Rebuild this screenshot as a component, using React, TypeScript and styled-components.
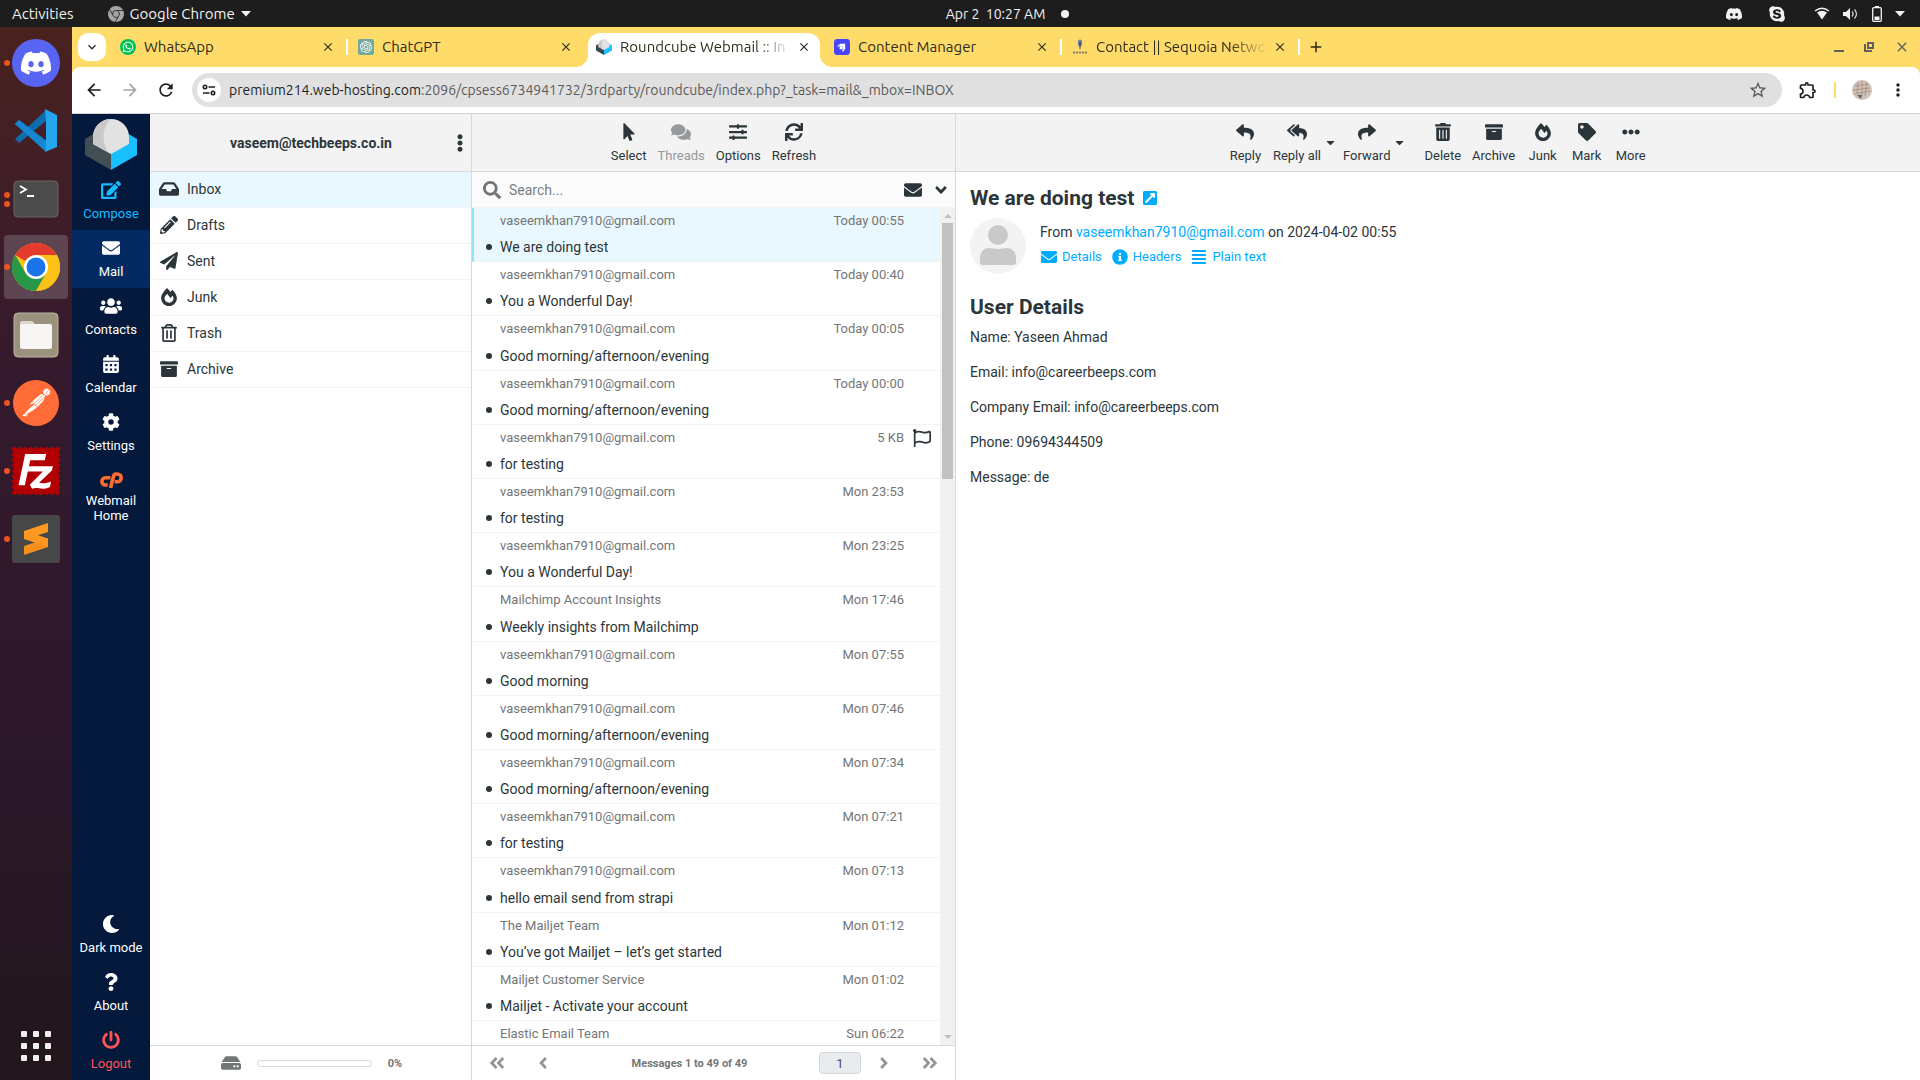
import React from "react";
import styled, { createGlobalStyle, css } from "styled-components";
import {
  FaEdit, FaEnvelope, FaUsers, FaCalendarAlt, FaCog, FaMoon, FaQuestion, FaPowerOff,
  FaInbox, FaPencilAlt, FaPaperPlane, FaFireAlt, FaRegTrashAlt, FaArchive, FaEllipsisV,
  FaMousePointer, FaComments, FaSlidersH, FaSync, FaSearch, FaAngleDown, FaReply, FaReplyAll,
  FaShare, FaCaretDown, FaTrashAlt, FaTag, FaEllipsisH, FaExternalLinkSquareAlt, FaInfoCircle,
  FaAlignJustify, FaRegFlag, FaHdd, FaAngleDoubleLeft, FaAngleLeft, FaAngleRight,
  FaAngleDoubleRight, FaSkype, FaWhatsapp,
} from "react-icons/fa";
import { SiDiscord, SiPostman, SiFilezilla, SiOpenai, SiStrapi, SiGooglechrome } from "react-icons/si";
import {
  MdArrowBack, MdArrowForward, MdRefresh, MdStarBorder, MdOutlineExtension, MdMoreVert,
  MdAdd, MdClose, MdKeyboardArrowDown,
} from "react-icons/md";

const systemFont = `Ubuntu, "Noto Sans", "Open Sans", sans-serif`;
const mailFont = `Roboto, "Liberation Sans", sans-serif`;

const c = {
  text: "#2c363a",
  muted: "#737677",
  line: "#d4dbde",
  rowLine: "#f1f3f4",
  accent: "#00acff",
  selected: "#e9f8ff",
  header: "#f3f3f3",
};

const GlobalStyle = createGlobalStyle`
  *, *::before, *::after { box-sizing: border-box; }
  html, body, #root { height: 100%; }
  body { margin: 0; overflow: hidden; }
  button { border: 0; padding: 0; margin: 0; background: none; color: inherit; font: inherit; cursor: pointer; }
  a { color: inherit; text-decoration: none; }
  ul, h1, h2, p { margin: 0; padding: 0; }
  ul { list-style: none; }
  svg { display: block; flex: none; }
`;

/* ---------- desktop ---------- */

const Desktop = styled.div`
  display: flex;
  flex-direction: column;
  height: 100%;
  font-family: ${systemFont};
`;

const TopBar = styled.header`
  display: grid;
  grid-template-columns: 1fr auto 1fr;
  align-items: center;
  flex: none;
  height: 27px;
  padding: 0 15px 0 12px;
  background: #1d1d1d;
  color: #f2f2f2;
  font-size: 15px;
  line-height: 20px;
  white-space: pre;
`;

const TopGroup = styled.div<{ $gap: number; $end?: boolean }>`
  display: flex;
  align-items: center;
  gap: ${(p) => p.$gap}px;
  justify-content: ${(p) => (p.$end ? "flex-end" : "flex-start")};
`;

const AppMenu = styled.button`
  display: flex;
  align-items: center;
  gap: 6px;
  margin-left: 34px;
`;

const Clock = styled.button`
  display: flex;
  align-items: center;
  gap: 16px;
  padding-left: 98px;
  font-size: 14px;
  &::after { content: ""; width: 8px; height: 8px; border-radius: 50%; background: #f2f2f2; }
`;

const TrayGap = styled.span`
  width: 2px;
`;

const Workspace = styled.div`
  display: flex;
  flex: 1;
  min-height: 0;
`;

const Dock = styled.nav`
  display: flex;
  flex-direction: column;
  align-items: center;
  gap: 4px;
  flex: none;
  width: 72px;
  padding: 4px 0 2px;
  background: linear-gradient(#49221f 0%, #411e27 15%, #351a2d 32%, #31192c 50%, #291727 75%, #22161c 100%);
`;

const DockItem = styled.button<{ $active?: boolean; $last?: boolean }>`
  position: relative;
  display: flex;
  align-items: center;
  justify-content: center;
  width: 64px;
  height: 64px;
  border-radius: 4px;
  background: ${(p) => (p.$active ? "#5d4652" : "transparent")};
  margin-top: ${(p) => (p.$last ? "auto" : "0")};
`;

const Running = styled.span`
  position: absolute;
  left: 0;
  top: 0;
  bottom: 0;
  display: flex;
  flex-direction: column;
  justify-content: center;
  gap: 3px;
  i { width: 6px; height: 6px; border-radius: 50%; background: #e95420; }
`;

const Disc = styled.span<{ $bg: string; $size: number; $fg?: string; $radius?: string }>`
  display: flex;
  align-items: center;
  justify-content: center;
  flex: none;
  width: ${(p) => p.$size}px;
  height: ${(p) => p.$size}px;
  border-radius: ${(p) => p.$radius || "50%"};
  background: ${(p) => p.$bg};
  color: ${(p) => p.$fg || "#fff"};
`;

/* ---------- browser ---------- */

const Browser = styled.main`
  display: flex;
  flex-direction: column;
  flex: 1;
  min-width: 0;
  background: #ffdb69;
`;

const TabStrip = styled.div`
  display: flex;
  align-items: flex-end;
  flex: none;
  height: 40px;
  padding-left: 6px;
  color: #2f2b1c;
  font-size: 15px;
`;

const TabSearch = styled.button`
  display: flex;
  align-items: center;
  justify-content: center;
  width: 28px;
  height: 28px;
  margin: 0 6px 6px 0;
  border-radius: 10px;
  background: #fff;
`;

const Tab = styled.div<{ $active?: boolean; $divider?: boolean }>`
  position: relative;
  display: flex;
  align-items: center;
  gap: 8px;
  width: 232px;
  height: 34px;
  margin-right: 6px;
  padding: 0 8px 6px;
  border-radius: 12px 12px 0 0;
  ${(p) => p.$active && css`
    background: #fff;
    &::before, &::after { content: ""; position: absolute; bottom: 0; width: 12px; height: 12px; }
    &::before { right: 100%; background: radial-gradient(circle at 0 0, transparent 12px, #fff 12px); }
    &::after { left: 100%; background: radial-gradient(circle at 100% 0, transparent 12px, #fff 12px); }
  `}
  ${(p) => p.$divider && css`
    &::after { content: ""; position: absolute; left: 234px; top: 6px; width: 2px; height: 16px; background: #fff; }
  `}
`;

const TabTitle = styled.span<{ $fade?: boolean }>`
  flex: 1;
  min-width: 0;
  white-space: nowrap;
  line-height: 20px;
  ${(p) => p.$fade && css`mask-image: linear-gradient(90deg, #000 80%, transparent 102%);`}
`;

const TabClose = styled.button`
  display: flex;
  align-items: center;
  justify-content: center;
  width: 16px;
  height: 16px;
`;

const NewTab = styled.button`
  display: flex;
  align-items: center;
  height: 28px;
  margin: 0 auto 6px 0;
  padding: 0 5px;
`;

const WindowButtons = styled.div`
  display: flex;
  align-items: center;
  gap: 20px;
  height: 28px;
  margin-bottom: 6px;
  padding-right: 10px;
  color: #5f5f5f;
`;

const NavBar = styled.div`
  display: flex;
  align-items: center;
  flex: none;
  height: 47px;
  padding: 0 12px;
  border-bottom: 1px solid #d0d2d3;
  border-radius: 8px 8px 0 0;
  background: #fff;
  color: #1f1f1f;
`;

const NavButton = styled.button<{ $dim?: boolean }>`
  display: flex;
  margin-right: 16px;
  color: ${(p) => (p.$dim ? "#a6a6a6" : "inherit")};
`;

const Omnibox = styled.div`
  display: flex;
  align-items: center;
  flex: 1;
  gap: 8px;
  height: 34px;
  padding: 0 14px 0 5px;
  border-radius: 17px;
  background: #e0e0e0;
  font-size: 14px;
  line-height: 20px;
  color: #5a5a5a;
`;

const Address = styled.span`
  flex: 1;
  white-space: nowrap;
  b { font-weight: 400; color: #1f1f1f; }
`;

const NavExtras = styled.div`
  display: flex;
  align-items: center;
  gap: 16px;
  margin-left: 16px;
`;

const ProfileDivider = styled.span`
  width: 2px;
  height: 16px;
  background: #ffdb69;
`;

/* ---------- webmail ---------- */

const Mail = styled.div`
  display: flex;
  flex: 1;
  min-height: 0;
  background: #fff;
  color: ${c.text};
  font-family: ${mailFont};
  font-size: 14px;
`;

const TaskMenu = styled.nav`
  display: flex;
  flex-direction: column;
  flex: none;
  width: 78px;
  background: #04193c;
  color: #fff;
`;

const LogoBox = styled.div`
  display: flex;
  justify-content: center;
  height: 58px;
  padding-top: 4px;
`;

const TaskItem = styled.a<{ $active?: boolean; $color?: string; $wrap?: boolean; $bottom?: boolean }>`
  display: flex;
  flex-direction: column;
  align-items: center;
  gap: ${(p) => (p.$wrap ? 3 : 6)}px;
  padding: 8px 4px 9px;
  margin-top: ${(p) => (p.$bottom ? "auto" : "0")};
  background: ${(p) => (p.$active ? "#042a61" : "transparent")};
  color: ${(p) => p.$color || "inherit"};
  font-size: 13px;
  line-height: 15px;
  text-align: center;
`;

const IconBox = styled.span`
  display: flex;
  align-items: center;
  justify-content: center;
  width: 24px;
  height: 20px;
`;

const Column = styled.section<{ $width?: number }>`
  display: flex;
  flex-direction: column;
  min-width: 0;
  ${(p) => (p.$width ? css`flex: none; width: ${p.$width}px; border-right: 1px solid ${c.line};` : css`flex: 1;`)}
`;

const ColumnHeader = styled.div`
  display: flex;
  align-items: center;
  justify-content: center;
  gap: 1px;
  flex: none;
  height: 58px;
  border-bottom: 1px solid ${c.line};
  background: ${c.header};
`;

const AccountHeader = styled(ColumnHeader)`
  display: grid;
  grid-template-columns: 1fr auto 1fr;
  padding: 0 2px 0 3px;
  font-weight: 700;
  button { justify-self: end; }
`;

const FolderLink = styled.a<{ $active?: boolean }>`
  display: flex;
  align-items: center;
  gap: 6px;
  height: 36px;
  padding: 0 0 2px 7px;
  border-bottom: 1px solid ${c.rowLine};
  background: ${(p) => (p.$active ? c.selected : "transparent")};
  line-height: 20px;
`;

const Footer = styled.footer`
  display: flex;
  align-items: center;
  flex: none;
  height: 35px;
  border-top: 1px solid ${c.line};
  color: ${c.muted};
  font-size: 11px;
  font-weight: 700;
`;

const QuotaFooter = styled(Footer)`
  justify-content: center;
  gap: 16px;
  margin-top: auto;
  padding-left: 2px;
`;

const QuotaBar = styled.div`
  width: 115px;
  height: 7px;
  border: 1px solid ${c.line};
  border-radius: 4px;
`;

const ToolButton = styled.button<{ $split?: boolean }>`
  display: flex;
  flex-direction: column;
  align-items: center;
  gap: 6px;
  min-width: 43px;
  padding: 0 ${(p) => (p.$split ? 4 : 5)}px 0 5px;
  font-size: 13px;
  line-height: 15px;
  &:disabled { color: #96999b; cursor: default; }
`;

const SplitToggle = styled.button`
  display: flex;
  justify-content: center;
  width: 8px;
  margin-right: 3px;
`;

const ToolGap = styled.span`
  width: 11px;
`;

const SearchBar = styled.form`
  display: flex;
  align-items: center;
  flex: none;
  height: 36px;
  padding-left: 10px;
  border-bottom: 1px solid ${c.rowLine};
  background: #fbfbfb;
  label { display: flex; width: 27px; padding-left: 1px; color: ${c.muted}; }
`;

const SearchInput = styled.input`
  flex: 1;
  min-width: 0;
  padding: 0;
  border: 0;
  outline: 0;
  background: none;
  color: ${c.text};
  font: 14px/20px ${mailFont};
  &::placeholder { color: #7b8082; opacity: 1; }
`;

const SearchAction = styled.button`
  display: flex;
  justify-content: center;
  width: 28px;
`;

const ListArea = styled.div`
  display: flex;
  flex: 1;
  min-height: 0;
`;

const MessageList = styled.ul`
  flex: 1;
  overflow: hidden;
  li:nth-child(5n + 3) > a { row-gap: 9px; }
`;

const MessageRow = styled.a<{ $active?: boolean }>`
  display: grid;
  grid-template-columns: 26px 1fr auto 36px;
  grid-template-rows: 18px 18px;
  row-gap: 8px;
  padding: 4px 0 5px;
  border-left: 2px solid ${(p) => (p.$active ? "#94e0ff" : "transparent")};
  border-bottom: 1px solid ${c.rowLine};
  background: ${(p) => (p.$active ? c.selected : "transparent")};
  line-height: 18px;
`;

const Meta = styled.span`
  color: ${c.muted};
  font-size: 13px;
`;

const Sender = styled(Meta)`
  grid-column: 2;
`;

const FlagCell = styled.span`
  display: flex;
  align-items: center;
  justify-content: center;
`;

const Unread = styled.span`
  grid-column: 1;
  grid-row: 2;
  place-self: center;
  width: 6px;
  height: 6px;
  margin-left: 4px;
  border-radius: 50%;
  background: ${c.text};
`;

const Subject = styled.span`
  grid-column: 2 / 4;
`;

const ScrollTrack = styled.div`
  display: flex;
  flex-direction: column;
  align-items: center;
  flex: none;
  width: 15px;
  padding: 6px 0;
  background: #f1f1f1;
  color: #c1c1c1;
`;

const ScrollThumb = styled.div`
  width: 11px;
  flex: 0 0 31%;
  margin: 5px 0 auto;
  background: #c1c1c1;
`;

const PageButton = styled.button`
  display: flex;
  justify-content: center;
  width: 46px;
  color: #8f9698;
`;

const PageStatus = styled.span`
  flex: 1;
  padding-right: 6px;
  text-align: center;
`;

const PageInput = styled.input`
  width: 42px;
  height: 22px;
  padding: 0;
  border: 1px solid #ced4da;
  border-radius: 4px;
  background: #e9ecef;
  color: #495057;
  font: 13px/18px ${mailFont};
  text-align: center;
`;

const Pager = styled(Footer)`
  padding: 0 2px;
`;

const Message = styled.article`
  padding: 14px;
  line-height: 21px;
`;

const MessageTitle = styled.h1`
  display: flex;
  align-items: center;
  gap: 8px;
  margin-bottom: 8px;
  font-size: 21px;
  line-height: 24px;
  svg { color: ${c.accent}; }
`;

const Envelope = styled.div`
  display: flex;
  gap: 14px;
  margin-bottom: 21px;
`;

const FromBlock = styled.div`
  padding-top: 4px;
  > p > a { color: ${c.accent}; }
`;

const HeaderLinks = styled.div`
  display: flex;
  gap: 10px;
  margin-top: 4px;
  padding-left: 1px;
  color: ${c.accent};
  font-size: 13px;
  line-height: 20px;
  a { display: flex; align-items: center; gap: 5px; }
`;

const BodyTitle = styled.h2`
  margin-bottom: 8px;
  font-size: 21px;
  line-height: 24px;
`;

const BodyLine = styled.p`
  margin-bottom: 14px;
`;

/* ---------- drawings ---------- */

const VsCodeIcon = () => (
  <svg width="44" height="44" viewBox="0 0 44 44">
    <path d="M1 15l4-4 29 22v9L1 15z" fill="#0d7fc4" />
    <path d="M1 30l4 4L32 12V1z" fill="#0e6cad" />
    <path d="M1 15l4-4 28 22-2 9z" fill="#1587cf" />
    <path d="M31 0l12 6v32l-12 5 1-10V12z" fill="#26a5ef" />
  </svg>
);

const TerminalIcon = () => (
  <svg width="46" height="38" viewBox="0 0 46 38">
    <rect x="1" y="1" width="44" height="36" rx="4" fill="#4b4b4b" stroke="#6b6765" />
    <path d="M7 6l6 3.500-6 3.500M14 16h7" fill="none" stroke="#fff" strokeWidth="1.800" />
  </svg>
);

const ChromeIcon = () => (
  <svg width="48" height="48" viewBox="0 0 48 48">
    <circle cx="24" cy="24" r="24" fill="#fbc116" />
    <path d="M24 24L3.200 12A24 24 0 0 1 44.800 12z" fill="#e33b2e" />
    <path d="M3.200 12A24 24 0 0 0 24 48l10.400-18L13.600 30z" fill="#279847" />
    <path d="M24 12h20.800A24 24 0 0 1 24 48l10.400-18z" fill="#fbc116" />
    <circle cx="24" cy="24" r="12" fill="#fff" />
    <circle cx="24" cy="24" r="9.500" fill="#1a73e8" />
  </svg>
);

const FilesIcon = () => (
  <svg width="46" height="46" viewBox="0 0 46 46">
    <rect x="1" y="1" width="44" height="44" rx="4" fill="#9b927d" stroke="#bdb6a3" />
    <path d="M7 12V11q0-2 2-2h10l3 3h14q2 0 2 2v4H7z" fill="#dedacb" />
    <rect x="7" y="12" width="32" height="25" rx="2" fill="#f7f6f5" />
  </svg>
);

const SublimeIcon = () => (
  <svg width="48" height="48" viewBox="0 0 48 48">
    <rect width="48" height="48" rx="3" fill="#474747" />
    <path d="M12 31l24-8v9l-24 8z" fill="#f58f1b" />
    <path d="M12 16l24-8v9l-10 3.300L36 23.500V32l-24-8z" fill="#ff9820" />
  </svg>
);

const AppsIcon = () => (
  <svg width="30" height="30" viewBox="0 0 30 30" fill="#f2f0ee">
    {[0, 12, 24].map((y) => [0, 12, 24].map((x) => <rect key={`${x}-${y}`} x={x} y={y} width="6" height="6" rx="1" />))}
  </svg>
);

const CpanelLogo = () => (
  <svg width="24" height="16" viewBox="0 0 24 16" fill="none" stroke="#ff6c2c" strokeWidth="3.600" strokeLinejoin="round">
    <path d="M11.500 5.800H6.500a3.600 3.600 0 0 0 0 7.200h2.200" />
    <path d="M11.500 16l3.200-12.200Q15.200 2 17 2h1.300a3.700 3.700 0 0 1 0 7.800h-2.600" />
  </svg>
);

const RoundcubeLogo = ({ size, dark = "#414f55" }: { size: number; dark?: string }) => (
  <svg width={size} height={size} viewBox="0 0 52 52">
    <path d="M0 21l10-6 16 20v17L0 37z" fill={dark} />
    <path d="M52 21l-10-6-16 20v17l26-15z" fill="#19c0ff" />
    <path d="M26 1A18 18 0 0 0 8 19v7l18 10 18-10v-7A18 18 0 0 0 26 1z" fill="#e2e2e2" />
    <path d="M26 1A18 18 0 0 0 8 19v7l16 9C17 25 16 10 26 1z" fill="#c9c9c9" />
  </svg>
);

const WifiIcon = () => (
  <svg width="16" height="14" viewBox="0 0 16 14">
    <path d="M1 4q7-5.500 14 0" fill="none" stroke="#f2f2f2" strokeWidth="1.300" />
    <path d="M3 5.500q5-3.500 10 0L8 12.500z" fill="#f2f2f2" />
  </svg>
);

const VolumeIcon = () => (
  <svg width="16" height="14" viewBox="0 0 16 14">
    <path d="M0 5h3l4-4v12l-4-4H0z" fill="#f2f2f2" />
    <path d="M9 4.500q2 2.500 0 5M11.500 2.500q4 4.500 0 9" fill="none" stroke="#d0d0d0" strokeWidth="1.300" />
  </svg>
);

const BatteryIcon = () => (
  <svg width="10" height="16" viewBox="0 0 10 16">
    <path d="M3 0h4v1.500H3z" fill="#f2f2f2" />
    <rect x="0.700" y="1.700" width="8.600" height="13.600" rx="1" fill="none" stroke="#f2f2f2" strokeWidth="1.300" />
    <path d="M2.500 10.500h5v3.500h-5z" fill="#f2f2f2" />
  </svg>
);

const DownTriangle = () => (
  <svg width="10" height="6" viewBox="0 0 10 6"><path d="M0 0h10L5 5.500z" fill="#f2f2f2" /></svg>
);

const SiteSettingsIcon = () => (
  <svg width="14" height="12" viewBox="0 0 14 12" fill="none" stroke="#1f1f1f" strokeWidth="1.600">
    <circle cx="3" cy="3" r="1.700" /><path d="M6.500 3H13M1 9h6.500" /><circle cx="11" cy="9" r="1.700" />
  </svg>
);

const SequoiaIcon = () => (
  <svg width="16" height="16" viewBox="0 0 16 16">
    <ellipse cx="8" cy="4" rx="2" ry="3.500" fill="#6d74a4" />
    <path d="M8 3v7" stroke="#3d3a63" />
    <path d="M1 13.500h14" stroke="#8b7a68" strokeWidth="2" strokeDasharray="2 1" />
  </svg>
);

const ProfilePhoto = () => (
  <svg width="20" height="20" viewBox="0 0 20 20">
    <circle cx="10" cy="10" r="10" fill="#cfc1b6" />
    <path d="M3 6l13-2M1 10l17-2M2 14l16-3M6 2l-1 12M10 1v15M15 3l-2 13" stroke="#a08478" strokeWidth=".7" />
    <path d="M5 15l4 4 1-4z" fill="#59616f" />
  </svg>
);

const AvatarIcon = () => (
  <svg width="56" height="56" viewBox="0 0 56 56">
    <circle cx="28" cy="28" r="28" fill="#f3f3f3" />
    <circle cx="28" cy="17" r="10" fill="#c9c9c9" />
    <path d="M10 44v-4c0-6 4-10 9-10 3 0 5 1 9 1s6-1 9-1c5 0 9 4 9 10v4q0 3-3 3H13q-3 0-3-3z" fill="#c9c9c9" />
  </svg>
);

const MinimizeIcon = () => (
  <svg width="10" height="10" viewBox="0 0 10 10"><path d="M0 8h10v2H0z" fill="currentColor" /></svg>
);

const RestoreIcon = () => (
  <svg width="10" height="10" viewBox="0 0 10 10" fill="none" stroke="currentColor" strokeWidth="2">
    <path d="M4 1h5v5H4zM1 2v7h7" />
  </svg>
);

/* ---------- data ---------- */

const dock = [
  { name: "Discord", dots: 1, icon: <Disc $bg="#5865f2" $size={48}><SiDiscord size={30} /></Disc> },
  { name: "Visual Studio Code", dots: 0, icon: <VsCodeIcon /> },
  { name: "Terminal", dots: 2, icon: <TerminalIcon /> },
  { name: "Google Chrome", dots: 1, active: true, icon: <ChromeIcon /> },
  { name: "Files", dots: 0, icon: <FilesIcon /> },
  { name: "Postman", dots: 1, icon: <Disc $bg="#fff" $size={44} $fg="#ff6c37"><SiPostman size={46} /></Disc> },
  { name: "FileZilla", dots: 1, icon: <Disc $bg="#fff" $size={44} $fg="#b30000" $radius="0"><SiFilezilla size={48} /></Disc> },
  { name: "Sublime Text", dots: 1, icon: <SublimeIcon /> },
];

const tabs = [
  { title: "WhatsApp", divider: true, icon: <Disc $bg="#00c254" $size={16}><FaWhatsapp size={12} /></Disc> },
  { title: "ChatGPT", icon: <Disc $bg="#74aa9c" $size={16} $radius="2px"><SiOpenai size={12} /></Disc> },
  { title: "Roundcube Webmail :: In", active: true, fade: true, icon: <RoundcubeLogo size={16} dark="#37474f" /> },
  { title: "Content Manager", divider: true, icon: <Disc $bg="#fff" $size={16} $fg="#4945ff" $radius="3px"><SiStrapi size={16} /></Disc> },
  { title: "Contact || Sequoia Netwo", divider: true, fade: true, icon: <SequoiaIcon /> },
];

const tasks = [
  { label: "Compose", icon: <FaEdit size={20} />, color: "#19bbff" },
  { label: "Mail", icon: <FaEnvelope size={18} />, active: true },
  { label: "Contacts", icon: <FaUsers size={22} /> },
  { label: "Calendar", icon: <FaCalendarAlt size={18} /> },
  { label: "Settings", icon: <FaCog size={18} /> },
  { label: "Webmail Home", icon: <CpanelLogo />, wrap: true },
  { label: "Dark mode", icon: <FaMoon size={18} />, bottom: true },
  { label: "About", icon: <FaQuestion size={18} /> },
  { label: "Logout", icon: <FaPowerOff size={18} />, color: "#ff5552" },
];

const folders = [
  { name: "Inbox", icon: <FaInbox size={20} />, active: true },
  { name: "Drafts", icon: <FaPencilAlt size={18} /> },
  { name: "Sent", icon: <FaPaperPlane size={18} /> },
  { name: "Junk", icon: <FaFireAlt size={18} /> },
  { name: "Trash", icon: <FaRegTrashAlt size={18} /> },
  { name: "Archive", icon: <FaArchive size={18} /> },
];

const me = "vaseemkhan7910@gmail.com";
const messages = [
  { from: me, subject: "We are doing test", date: "Today 00:55", active: true },
  { from: me, subject: "You a Wonderful Day!", date: "Today 00:40" },
  { from: me, subject: "Good morning/afternoon/evening", date: "Today 00:05" },
  { from: me, subject: "Good morning/afternoon/evening", date: "Today 00:00" },
  { from: me, subject: "for testing", date: "5 KB", flag: true },
  { from: me, subject: "for testing", date: "Mon 23:53" },
  { from: me, subject: "You a Wonderful Day!", date: "Mon 23:25" },
  { from: "Mailchimp Account Insights", subject: "Weekly insights from Mailchimp", date: "Mon 17:46" },
  { from: me, subject: "Good morning", date: "Mon 07:55" },
  { from: me, subject: "Good morning/afternoon/evening", date: "Mon 07:46" },
  { from: me, subject: "Good morning/afternoon/evening", date: "Mon 07:34" },
  { from: me, subject: "for testing", date: "Mon 07:21" },
  { from: me, subject: "hello email send from strapi", date: "Mon 07:13" },
  { from: "The Mailjet Team", subject: "You’ve got Mailjet – let’s get started", date: "Mon 01:12" },
  { from: "Mailjet Customer Service", subject: "Mailjet - Activate your account", date: "Mon 01:02" },
  { from: "Elastic Email Team", subject: "", date: "Sun 06:22" },
];

const bodyLines = [
  "Name: Yaseen Ahmad",
  "Email: info@careerbeeps.com",
  "Company Email: info@careerbeeps.com",
  "Phone: 09694344509",
  "Message: de",
];

/* ---------- parts ---------- */

const Tool = ({ icon, label, disabled, split }: { icon: React.ReactNode; label: string; disabled?: boolean; split?: boolean }) => (
  <>
    <ToolButton disabled={disabled} $split={split}><IconBox>{icon}</IconBox>{label}</ToolButton>
    {split && <SplitToggle aria-label={`${label} options`}><FaCaretDown size={13} /></SplitToggle>}
  </>
);

const BrowserChrome = () => (
  <>
    <TabStrip>
      <TabSearch aria-label="Search tabs"><MdKeyboardArrowDown size={16} /></TabSearch>
      {tabs.map((t) => (
        <Tab key={t.title} $active={t.active} $divider={t.divider}>
          {t.icon}
          <TabTitle $fade={t.fade}>{t.title}</TabTitle>
          <TabClose aria-label={`Close ${t.title}`}><MdClose size={14} /></TabClose>
        </Tab>
      ))}
      <NewTab aria-label="New tab"><MdAdd size={18} /></NewTab>
      <WindowButtons>
        <button aria-label="Minimize"><MinimizeIcon /></button>
        <button aria-label="Restore"><RestoreIcon /></button>
        <button aria-label="Close window"><MdClose size={16} /></button>
      </WindowButtons>
    </TabStrip>
    <NavBar>
      <NavButton aria-label="Back"><MdArrowBack size={20} /></NavButton>
      <NavButton aria-label="Forward" $dim><MdArrowForward size={20} /></NavButton>
      <NavButton aria-label="Reload"><MdRefresh size={20} /></NavButton>
      <Omnibox>
        <Disc as="button" aria-label="Site information" $bg="#fff" $size={24}><SiteSettingsIcon /></Disc>
        <Address><b>premium214.web-hosting.com</b>:2096/cpsess6734941732/3rdparty/roundcube/index.php?_task=mail&amp;_mbox=INBOX</Address>
        <button aria-label="Bookmark"><MdStarBorder size={20} /></button>
      </Omnibox>
      <NavExtras>
        <button aria-label="Extensions"><MdOutlineExtension size={20} /></button>
        <ProfileDivider />
        <button aria-label="Profile"><ProfilePhoto /></button>
        <button aria-label="Menu"><MdMoreVert size={20} /></button>
      </NavExtras>
    </NavBar>
  </>
);

const Folders = () => (
  <Column $width={322}>
    <AccountHeader>
      <span />
      <span>vaseem@techbeeps.co.in</span>
      <button aria-label="Folder actions"><FaEllipsisV size={18} /></button>
    </AccountHeader>
    <ul>
      {folders.map((f) => (
        <li key={f.name}>
          <FolderLink href="#" $active={f.active}><IconBox>{f.icon}</IconBox>{f.name}</FolderLink>
        </li>
      ))}
    </ul>
    <QuotaFooter><FaHdd size={20} /><QuotaBar /><span>0%</span></QuotaFooter>
  </Column>
);

const Messages = () => (
  <Column $width={484}>
    <ColumnHeader>
      <Tool icon={<FaMousePointer size={18} />} label="Select" />
      <Tool icon={<FaComments size={20} />} label="Threads" disabled />
      <Tool icon={<FaSlidersH size={18} />} label="Options" />
      <Tool icon={<FaSync size={18} />} label="Refresh" />
    </ColumnHeader>
    <SearchBar>
      <label htmlFor="search" aria-label="Search"><FaSearch size={18} /></label>
      <SearchInput id="search" placeholder="Search..." />
      <SearchAction type="button" aria-label="Show unread"><FaEnvelope size={18} /></SearchAction>
      <SearchAction type="button" aria-label="Search options"><FaAngleDown size={18} /></SearchAction>
    </SearchBar>
    <ListArea>
      <MessageList>
        {messages.map((m) => (
          <li key={m.date}>
            <MessageRow href="#" $active={m.active}>
              <Sender>{m.from}</Sender>
              <Meta>{m.date}</Meta>
              <FlagCell>{m.flag && <FaRegFlag size={18} />}</FlagCell>
              {m.subject && <Unread />}
              <Subject>{m.subject}</Subject>
            </MessageRow>
          </li>
        ))}
      </MessageList>
      <ScrollTrack>
        <svg width="8" height="4" viewBox="0 0 8 4"><path d="M0 4l4-4 4 4z" fill="currentColor" /></svg>
        <ScrollThumb />
        <svg width="8" height="4" viewBox="0 0 8 4"><path d="M0 0l4 4 4-4z" fill="currentColor" /></svg>
      </ScrollTrack>
    </ListArea>
    <Pager>
      <PageButton aria-label="First page"><FaAngleDoubleLeft size={18} /></PageButton>
      <PageButton aria-label="Previous page"><FaAngleLeft size={18} /></PageButton>
      <PageStatus>Messages 1 to 49 of 49</PageStatus>
      <PageInput aria-label="Page" defaultValue="1" />
      <PageButton aria-label="Next page"><FaAngleRight size={18} /></PageButton>
      <PageButton aria-label="Last page"><FaAngleDoubleRight size={18} /></PageButton>
    </Pager>
  </Column>
);

const Reader = () => (
  <Column>
    <ColumnHeader>
      <Tool icon={<FaReply size={18} />} label="Reply" />
      <Tool icon={<FaReplyAll size={20} />} label="Reply all" split />
      <Tool icon={<FaShare size={18} />} label="Forward" split />
      <ToolGap />
      <Tool icon={<FaTrashAlt size={18} />} label="Delete" />
      <Tool icon={<FaArchive size={18} />} label="Archive" />
      <Tool icon={<FaFireAlt size={18} />} label="Junk" />
      <Tool icon={<FaTag size={18} />} label="Mark" />
      <Tool icon={<FaEllipsisH size={18} />} label="More" />
    </ColumnHeader>
    <Message>
      <MessageTitle>We are doing test <a href="#" aria-label="Open in new window"><FaExternalLinkSquareAlt size={16} /></a></MessageTitle>
      <Envelope>
        <AvatarIcon />
        <FromBlock>
          <p>From <a href="#">{me}</a> on 2024-04-02 00:55</p>
          <HeaderLinks>
            <a href="#"><FaEnvelope size={16} />Details</a>
            <a href="#"><FaInfoCircle size={16} />Headers</a>
            <a href="#"><FaAlignJustify size={16} />Plain text</a>
          </HeaderLinks>
        </FromBlock>
      </Envelope>
      <BodyTitle>User Details</BodyTitle>
      {bodyLines.map((l) => <BodyLine key={l}>{l}</BodyLine>)}
    </Message>
  </Column>
);

export default function App() {
  return (
    <Desktop>
      <GlobalStyle />
      <TopBar>
        <TopGroup $gap={0}>
          <button>Activities</button>
          <AppMenu><SiGooglechrome size={16} color="#a5a5a5" />Google Chrome<DownTriangle /></AppMenu>
        </TopGroup>
        <Clock>{"Apr 2  10:27 AM"}</Clock>
        <TopGroup $gap={13} $end>
          <SiDiscord size={16} /><span /><FaSkype size={18} /><TrayGap /><WifiIcon /><VolumeIcon /><BatteryIcon /><DownTriangle />
        </TopGroup>
      </TopBar>
      <Workspace>
        <Dock>
          {dock.map((d) => (
            <DockItem key={d.name} aria-label={d.name} $active={d.active}>
              <Running>{Array.from({ length: d.dots }, (_, i) => <i key={i} />)}</Running>
              {d.icon}
            </DockItem>
          ))}
          <DockItem aria-label="Show applications" $last><AppsIcon /></DockItem>
        </Dock>
        <Browser>
          <BrowserChrome />
          <Mail>
            <TaskMenu>
              <LogoBox><RoundcubeLogo size={52} /></LogoBox>
              {tasks.map((t) => (
                <TaskItem key={t.label} href="#" $active={t.active} $color={t.color} $wrap={t.wrap} $bottom={t.bottom}>
                  <IconBox>{t.icon}</IconBox>{t.label}
                </TaskItem>
              ))}
            </TaskMenu>
            <Folders />
            <Messages />
            <Reader />
          </Mail>
        </Browser>
      </Workspace>
    </Desktop>
  );
}
